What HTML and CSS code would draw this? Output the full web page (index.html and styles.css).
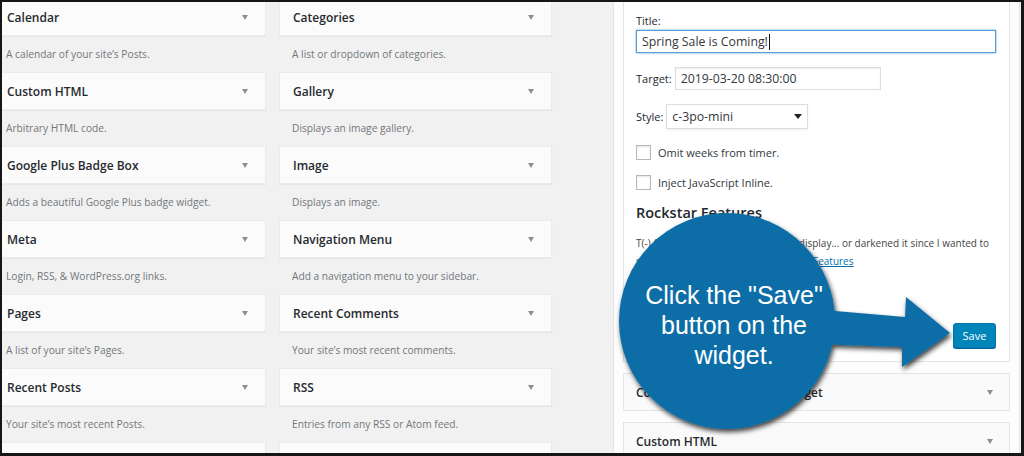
FILE: index.html
```html
<!DOCTYPE html>
<html lang="en">
<head>
<meta charset="utf-8">
<title>Widgets</title>
<link rel="stylesheet" href="styles.css">
</head>
<body>
<div class="screen">
  <div class="available">
    <div class="witem"><div class="wtop"><span class="wtitle">Calendar</span><span class="tri"></span></div><div class="wdesc">A calendar of your site’s Posts.</div></div>
    <div class="witem"><div class="wtop"><span class="wtitle">Categories</span><span class="tri"></span></div><div class="wdesc">A list or dropdown of categories.</div></div>
    <div class="witem"><div class="wtop"><span class="wtitle">Custom HTML</span><span class="tri"></span></div><div class="wdesc">Arbitrary HTML code.</div></div>
    <div class="witem"><div class="wtop"><span class="wtitle">Gallery</span><span class="tri"></span></div><div class="wdesc">Displays an image gallery.</div></div>
    <div class="witem"><div class="wtop"><span class="wtitle">Google Plus Badge Box</span><span class="tri"></span></div><div class="wdesc">Adds a beautiful Google Plus badge widget.</div></div>
    <div class="witem"><div class="wtop"><span class="wtitle">Image</span><span class="tri"></span></div><div class="wdesc">Displays an image.</div></div>
    <div class="witem"><div class="wtop"><span class="wtitle">Meta</span><span class="tri"></span></div><div class="wdesc">Login, RSS, &amp; WordPress.org links.</div></div>
    <div class="witem"><div class="wtop"><span class="wtitle">Navigation Menu</span><span class="tri"></span></div><div class="wdesc">Add a navigation menu to your sidebar.</div></div>
    <div class="witem"><div class="wtop"><span class="wtitle">Pages</span><span class="tri"></span></div><div class="wdesc">A list of your site’s Pages.</div></div>
    <div class="witem"><div class="wtop"><span class="wtitle">Recent Comments</span><span class="tri"></span></div><div class="wdesc">Your site’s most recent comments.</div></div>
    <div class="witem"><div class="wtop"><span class="wtitle">Recent Posts</span><span class="tri"></span></div><div class="wdesc">Your site’s most recent Posts.</div></div>
    <div class="witem"><div class="wtop"><span class="wtitle">RSS</span><span class="tri"></span></div><div class="wdesc">Entries from any RSS or Atom feed.</div></div>
    <div class="witem"><div class="wtop"></div></div>
    <div class="witem"><div class="wtop"></div></div>
  </div>

  <div class="sidebar">
    <div class="widget open">
      <div class="winside">
        <label class="lbl-block">Title:</label>
        <div class="input focus">Spring Sale is Coming!<span class="cursor"></span></div>
        <div class="row first">
          <label class="lbl">Target:</label>
          <div class="input target">2019-03-20 08:30:00</div>
        </div>
        <div class="row">
          <label class="lbl">Style:</label>
          <div class="select"><span>c-3po-mini</span><span class="tri dark"></span></div>
        </div>
        <div class="check c1"><span class="box"></span><span>Omit weeks from timer.</span></div>
        <div class="check c2"><span class="box"></span><span>Inject JavaScript Inline.</span></div>
        <h4 class="feat">Rockstar Features</h4>
        <p class="desc">T(-) Countdown has now faded the display... or darkened it since I wanted to<br>show you the awesome new <a href="#">Rockstar Features</a></p>
        <div class="actions">
          <button class="save" type="button">Save</button>
        </div>
      </div>
    </div>
    <div class="widget closed"><span class="wtitle">Countdown: Spring Sales Widget</span><span class="tri"></span></div>
    <div class="widget closed"><span class="wtitle">Custom HTML</span><span class="tri"></span></div>
  </div>

  <svg class="overlay" width="1024" height="456" viewBox="0 0 1024 456" aria-hidden="true">
    <defs>
      <filter id="sh" x="-20%" y="-20%" width="140%" height="140%">
        <feDropShadow dx="1.5" dy="3" stdDeviation="2.5" flood-color="#000" flood-opacity="0.75"/>
      </filter>
    </defs>
    <g filter="url(#sh)" fill="#0f6ea7">
      <polygon points="812,309 905,317 906,297 950,333 902,367 902,347 812,344"/>
      <circle cx="727" cy="321" r="108"/>
    </g>
  </svg>
  <div class="callout">Click the "Save"<br>button on the<br>widget.</div>
</div>
</body>
</html>
```
FILE: styles.css
```css
* { box-sizing: border-box; }
html, body { margin: 0; padding: 0; }
body {
  background: #141414;
  font-family: "Open Sans", "Noto Sans", sans-serif;
  color: #23282d;
}
.screen {
  position: relative;
  width: 1024px;
  height: 456px;
  border: solid #161616;
  border-width: 2px 3px 3px 2px;
  background: #f1f1f1;
  overflow: hidden;
  display: flex;
  align-items: flex-start;
}

/* available widgets */
.available {
  flex: none;
  display: grid;
  grid-template-columns: 273px 273px;
  column-gap: 13px;
  margin: -4px 0 0 -9px;
}
.wtop {
  height: 38px;
  display: flex;
  align-items: center;
  justify-content: space-between;
  padding: 0 17px 0 13px;
  background: #fbfbfb;
  border: 1px solid #ebebeb;
  box-shadow: 0 1px 1px rgba(0,0,0,.04);
}
.wtitle { font-size: 12px; font-weight: 600; color: #262a2e; white-space: nowrap; }
.tri {
  width: 0; height: 0;
  border-left: 3.5px solid transparent;
  border-right: 3.5px solid transparent;
  border-top: 5px solid #8a8f94;
}
.tri.dark { border-top-color: #222; border-left-width: 4px; border-right-width: 4px; }
.wdesc {
  height: 36px;
  line-height: 36px;
  font-size: 10.2px;
  color: #72777c;
  padding-left: 13px;
  white-space: nowrap;
}

/* sidebar */
.sidebar {
  flex: 1;
  min-width: 0;
  margin: -20px 1px 0 61px;
  padding: 9px;
  background: #fdfdfd;
  border: 1px solid #e5e5e5;
}
.widget { border: 1px solid #e5e5e5; min-width: 0; }
.widget.open { background: #fff; }
.winside { padding: 20px 13px 13px 12px; overflow: hidden; }
.lbl-block { display: block; font-size: 11px; line-height: 16px; margin-bottom: 1px; }
.lbl { font-size: 11px; line-height: 16px; }
.input {
  height: 23px;
  display: flex;
  align-items: center;
  padding: 0 5px;
  background: #fff;
  border: 1px solid #ddd;
  box-shadow: inset 0 1px 2px rgba(0,0,0,.07);
  font-size: 12.3px;
  color: #32373c;
  white-space: nowrap;
}
.input.focus {
  border-color: #5b9dd9;
  box-shadow: 0 0 2px rgba(30,140,190,.8);
}
.cursor { display: inline-block; width: 1px; height: 16px; background: #111; margin-left: 1px; }
.row { display: flex; align-items: center; gap: 3px; margin-top: 14px; }
.input.target { width: 206px; }
.select {
  width: 142px;
  height: 25px;
  display: flex;
  align-items: center;
  justify-content: space-between;
  padding: 0 5px;
  background: #fff;
  border: 1px solid #ddd;
  box-shadow: 0 1px 2px rgba(0,0,0,.07);
  font-size: 12.3px;
  color: #32373c;
}
.check { display: flex; align-items: center; gap: 7px; height: 15px; font-size: 11px; color: #32373c; }
.check.c1 { margin-top: 16px; }
.check.c2 { margin-top: 15px; }
.box {
  width: 15px; height: 15px;
  border: 1px solid #b4b9be;
  background: #fff;
  box-shadow: inset 0 1px 2px rgba(0,0,0,.1);
}
.feat { margin: 13px 0 0; font-size: 14.5px; font-weight: 600; line-height: 20px; }
.desc { margin: 11px 0 0; font-size: 10px; line-height: 18px; color: #444; white-space: nowrap; }
.desc a { color: #0073aa; }
.actions { margin-top: 53px; height: 25px; display: flex; align-items: center; justify-content: flex-end; }
.save {
  width: 43px;
  height: 25px;
  padding: 0;
  background: #0085ba;
  border: 1px solid #0073aa;
  border-radius: 3px;
  box-shadow: 0 1px 0 #006799;
  color: #fff;
  font-family: inherit;
  font-size: 11px;
}
.widget.closed {
  margin-top: 11px;
  height: 38px;
  display: flex;
  align-items: center;
  justify-content: space-between;
  padding: 0 16px 0 12px;
  background: #fafafa;
}

/* call-out annotation */
.overlay { position: absolute; left: -2px; top: -2px; }
.callout {
  position: absolute;
  left: 630px;
  top: 278px;
  width: 204px;
  text-align: center;
  font-family: "Liberation Sans", Arial, sans-serif;
  font-size: 25px;
  line-height: 30px;
  color: #fff;
}
```
